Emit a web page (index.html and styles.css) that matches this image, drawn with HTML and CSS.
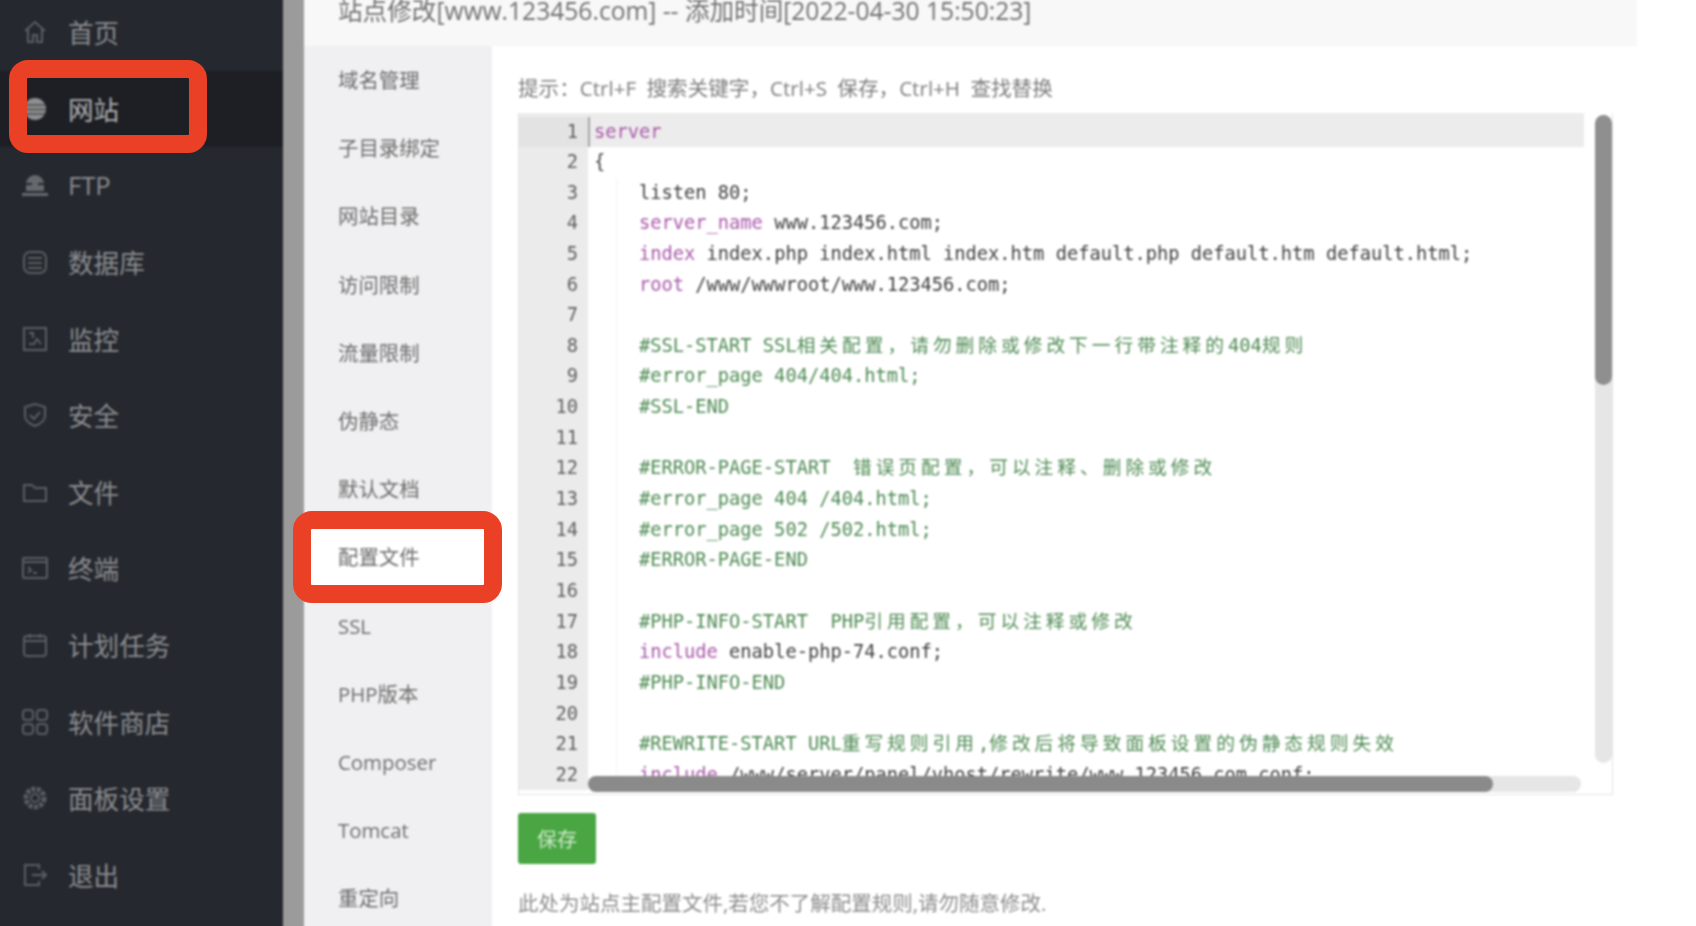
FILE: index.html
```html
<!DOCTYPE html>
<html lang="zh-CN">
<head>
<meta charset="utf-8">
<title>站点修改</title>
<link rel="stylesheet" href="styles.css">
</head>
<body>
<div class="app">
  <aside class="sidebar">
    <ul class="menu">
      <li class="menu-item"><svg class="ico" viewBox="0 0 26 26"><path d="M3 12 13 3l10 9M6 10v13h5v-7h4v7h5V10"/></svg><span>首页</span></li>
      <li class="menu-item active"><svg class="ico globe" viewBox="0 0 26 26"><circle cx="13" cy="13" r="11"/><path class="cut" d="M3 9h20M2 13.500h22M3 18h20"/></svg><span>网站</span></li>
      <li class="menu-item"><svg class="ico solid" viewBox="0 0 26 26"><path d="M4 12a9 9 0 0 1 18 0v7H4z"/><path d="M0 21h26v3H0z"/><path class="cut" d="M4 12h6M16 12h6"/></svg><span>FTP</span></li>
      <li class="menu-item"><svg class="ico" viewBox="0 0 26 26"><rect x="2" y="3" width="22" height="21" rx="6"/><path d="M6 9h14M6 14h14M6 19h14"/></svg><span>数据库</span></li>
      <li class="menu-item"><svg class="ico" viewBox="0 0 26 26"><path d="M2 2h22v22H2z"/><path d="M7 7h4v5M7 18h5l3-5 4 5"/></svg><span>监控</span></li>
      <li class="menu-item"><svg class="ico" viewBox="0 0 26 26"><path d="M13 2 3 5v9c0 5 5 8 10 10 5-2 10-5 10-10V5z"/><path d="m8 13 4 4 6-7"/></svg><span>安全</span></li>
      <li class="menu-item"><svg class="ico" viewBox="0 0 26 26"><path d="M2 6h8l3 3h11v13H2z"/></svg><span>文件</span></li>
      <li class="menu-item"><svg class="ico" viewBox="0 0 26 26"><rect x="1" y="3" width="24" height="20" rx="1"/><path d="M1 7h24M6 12l3 3-3 3M11 18h4"/></svg><span>终端</span></li>
      <li class="menu-item"><svg class="ico" viewBox="0 0 26 26"><rect x="2" y="4" width="22" height="20" rx="3"/><path d="M2 9h22M8 2v4M18 2v4"/></svg><span>计划任务</span></li>
      <li class="menu-item"><svg class="ico" viewBox="0 0 26 26"><rect x="1" y="1" width="10" height="10" rx="3"/><rect x="15" y="1" width="10" height="10" rx="3"/><rect x="1" y="15" width="10" height="10" rx="3"/><rect x="15" y="15" width="10" height="10" rx="3"/></svg><span>软件商店</span></li>
      <li class="menu-item"><svg class="ico" viewBox="0 0 26 26"><circle cx="13" cy="13" r="4"/><circle class="gear" cx="13" cy="13" r="9"/></svg><span>面板设置</span></li>
      <li class="menu-item"><svg class="ico" viewBox="0 0 26 26"><path d="M17 7V3H3v20h14v-4M10 13h14M20 9l4 4-4 4"/></svg><span>退出</span></li>
    </ul>
  </aside>
  <div class="strip"></div>
  <section class="panel">
    <header class="panel-title">站点修改[www.123456.com] -- 添加时间[2022-04-30 15:50:23]</header>
    <div class="panel-body">
      <ul class="tabs">
        <li>域名管理</li>
        <li>子目录绑定</li>
        <li>网站目录</li>
        <li>访问限制</li>
        <li>流量限制</li>
        <li>伪静态</li>
        <li>默认文档</li>
        <li class="current">配置文件</li>
        <li>SSL</li>
        <li>PHP版本</li>
        <li>Composer</li>
        <li>Tomcat</li>
        <li>重定向</li>
      </ul>
      <main class="content">
        <p class="tip">提示：Ctrl+F 搜索关键字，Ctrl+S 保存，Ctrl+H 查找替换</p>
        <div class="editor">
          <div class="line first"><b>1</b><code class="caret"><i class="kw">server</i></code></div>
          <div class="line"><b>2</b><code>{</code></div>
          <div class="line"><b>3</b><code class="in">listen 80;</code></div>
          <div class="line"><b>4</b><code class="in"><i class="kw">server_name</i> www.123456.com;</code></div>
          <div class="line"><b>5</b><code class="in"><i class="kw">index</i> index.php index.html index.htm default.php default.htm default.html;</code></div>
          <div class="line"><b>6</b><code class="in"><i class="kw">root</i> /www/wwwroot/www.123456.com;</code></div>
          <div class="line"><b>7</b><code class="in"></code></div>
          <div class="line"><b>8</b><code class="in cm">#SSL-START SSL<i class="zh">相关配置，请勿删除或修改下一行带注释的</i>404<i class="zh">规则</i></code></div>
          <div class="line"><b>9</b><code class="in cm">#error_page 404/404.html;</code></div>
          <div class="line"><b>10</b><code class="in cm">#SSL-END</code></div>
          <div class="line"><b>11</b><code class="in"></code></div>
          <div class="line"><b>12</b><code class="in cm">#ERROR-PAGE-START  <i class="zh">错误页配置，可以注释、删除或修改</i></code></div>
          <div class="line"><b>13</b><code class="in cm">#error_page 404 /404.html;</code></div>
          <div class="line"><b>14</b><code class="in cm">#error_page 502 /502.html;</code></div>
          <div class="line"><b>15</b><code class="in cm">#ERROR-PAGE-END</code></div>
          <div class="line"><b>16</b><code class="in"></code></div>
          <div class="line"><b>17</b><code class="in cm">#PHP-INFO-START  PHP<i class="zh">引用配置，可以注释或修改</i></code></div>
          <div class="line"><b>18</b><code class="in"><i class="kw">include</i> enable-php-74.conf;</code></div>
          <div class="line"><b>19</b><code class="in cm">#PHP-INFO-END</code></div>
          <div class="line"><b>20</b><code class="in"></code></div>
          <div class="line"><b>21</b><code class="in cm">#REWRITE-START URL<i class="zh">重写规则引用</i>,<i class="zh">修改后将导致面板设置的伪静态规则失效</i></code></div>
          <div class="line"><b>22</b><code class="in"><i class="kw">include</i> /www/server/panel/vhost/rewrite/www.123456.com.conf;</code></div>
          <div class="vbar"><div class="vthumb"></div></div>
          <div class="hbar"><div class="hthumb"></div></div>
        </div>
        <button class="save" type="button">保存</button>
        <p class="note">此处为站点主配置文件,若您不了解配置规则,请勿随意修改.</p>
      </main>
    </div>
  </section>
</div>
<div class="mark mark-site"></div>
<div class="mark mark-config"></div>
</body>
</html>
```
FILE: styles.css
```css
* { box-sizing: border-box; }
html, body { margin: 0; height: 100%; background: #fff; overflow: hidden; }
body { position: relative; font-family: "Open Sans", "Noto Sans CJK SC", sans-serif; }
ul { list-style: none; margin: 0; padding: 0; }
p { margin: 0; }

/* Runs 4px past the viewport so the blur does not fade the page edges. */
.app { display: flex; margin: -4px; height: 934px; overflow: hidden; filter: blur(0.8px); }

.sidebar { width: 287px; flex: none; padding-left: 4px; background: #25282e; overflow: hidden; }
.menu { margin-top: -2px; }
.menu-item { display: flex; align-items: center; height: 76.6px; padding-left: 22px; gap: 20px; font-size: 25.6px; color: #8b8d90; }
.menu-item.active { margin-left: -4px; padding-left: 26px; background: #1d1f25; color: #b0b0b1; }
.ico { width: 26px; height: 26px; flex: none; fill: none; stroke: #5a5d62; stroke-width: 2; }
.active .globe { fill: #8f8f90; stroke: none; }
.globe .cut { stroke: #4c4d50; stroke-width: 1.5; fill: none; }
.solid { fill: #65686c; stroke: none; }
.solid .cut { stroke: #25282e; stroke-width: 2; }
.gear { stroke-width: 5; stroke-dasharray: 4 1.5; }

.strip { width: 21px; flex: none; background: #9b9b9b; }

.panel { width: 1333px; flex: none; display: flex; flex-direction: column; }
.panel-title { height: 50px; flex: none; padding: 4px 0 0 34px; background: #f8f8f8; color: #707070; font-size: 24.6px; line-height: 21px; white-space: nowrap; overflow: hidden; }
.panel-body { flex: 1; display: flex; min-height: 0; }

.tabs { width: 188px; flex: none; background: #f0f0f2; }
.tabs li { height: 68.2px; line-height: 68.2px; padding-left: 34px; font-size: 20.4px; color: #6c6c6c; white-space: nowrap; }
.tabs li.current { background: #fff; }

.content { flex: 1; padding: 28px 0 0 26px; min-width: 0; }
.tip { height: 28px; line-height: 28px; margin-bottom: 11px; font-size: 20.6px; word-spacing: 5px; color: #7e7e7e; white-space: nowrap; }

.editor { position: relative; width: 1095px; height: 682px; border: 1px solid #e4e4e4; border-top: 0; overflow: hidden; background: #fff; font-family: "DejaVu Sans Mono", "Noto Sans CJK SC", monospace; font-size: 18.72px; }
.line { display: flex; height: 30.65px; line-height: 30.65px; }
.line.first { height: 34px; padding-top: 3.85px; background: linear-gradient(#ececec, #ececec) 0 0 / 1065px 100% no-repeat; }
.line b { width: 69px; flex: none; padding-right: 10px; text-align: right; font-weight: 400; color: #5e5e5e; background: #ebebeb; }
.line.first b { background: #e3e3e3; }
.line code { font: inherit; color: #404040; padding-left: 6px; white-space: pre; }
.line code.caret { padding-left: 4px; border-left: 2px solid #a5a5a5; }
.line code.in { padding-left: 51px; background: linear-gradient(#f4f4f4, #f4f4f4) 28px 0 / 1px 100% no-repeat; }
.line code.cm { color: #4d8a52; }
.line i { font-style: normal; }
.kw { color: #a958a9; }
.zh { letter-spacing: 4px; }

.vbar { position: absolute; right: 0; top: 2px; width: 17px; height: 648px; border-radius: 9px; background: #e6e6e6; }
.vthumb { height: 270px; border-radius: 9px; background: #8f8f8f; }
.hbar { position: absolute; left: 69px; bottom: 2px; width: 993px; height: 16px; border-radius: 8px; background: #e6e6e6; }
.hthumb { width: 905px; height: 100%; border-radius: 8px; background: #8a8a8a; }

.save { display: block; margin-top: 18px; width: 78px; height: 51px; padding: 0; border: 0; border-radius: 3px; background: #49a643; color: #cfe8cb; font-family: inherit; font-size: 20px; }
.note { margin-top: 25px; height: 28px; line-height: 28px; font-size: 20.5px; color: #8c8c8c; white-space: nowrap; }

.mark { position: absolute; border: 18px solid #ea4025; border-radius: 19px; }
.mark-site { left: 9px; top: 60px; width: 198px; height: 93px; }
.mark-config { left: 293px; top: 511px; width: 209px; height: 92px; }
```
